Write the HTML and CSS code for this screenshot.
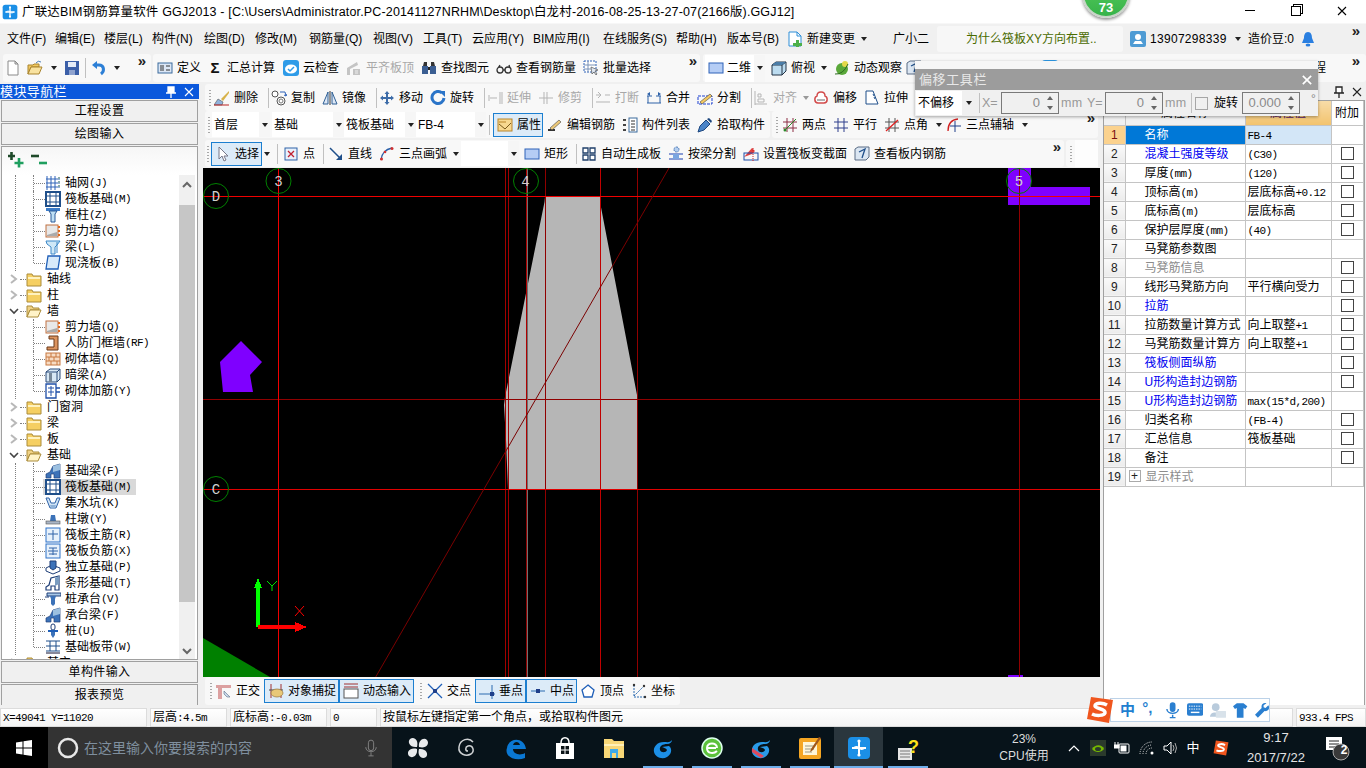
FILE: index.html
```html
<!DOCTYPE html>
<html lang="zh-CN">
<head>
<meta charset="utf-8">
<title>广联达BIM钢筋算量软件 GGJ2013</title>
<link rel="stylesheet" href="styles.css">
</head>
<body>
<svg class="lib" aria-hidden="true">
<defs>
<symbol id="app" viewBox="0 0 24 24"><rect x="1" y="1" width="22" height="22" rx="4" fill="#1b8fe6"/><path d="M12 5v14M5 12h14" stroke="#fff" stroke-width="2" fill="none"/><path d="M12 12c-3-3-5 0-6 0M12 12c3 3 5 0 6 0" stroke="#fff" stroke-width="1.5" fill="none"/><circle cx="12" cy="5" r="1.6" fill="#fff"/><circle cx="12" cy="19" r="1.6" fill="#fff"/></symbol>
<symbol id="doc" viewBox="0 0 16 16"><path d="M3 1h7l3 3v11H3z" fill="#fff" stroke="#8a8a8a"/><path d="M10 1v3h3z" fill="#ddd" stroke="#8a8a8a"/></symbol>
<symbol id="open" viewBox="0 0 16 16"><path d="M1 5h5l1-1h5v3H4l-3 7z" fill="#f0c860" stroke="#a9842e"/><path d="M4 7h11l-3 7H1z" fill="#f8e2a0" stroke="#a9842e"/><path d="M9 3q2-3 5-1" stroke="#4a7fb8" fill="none"/></symbol>
<symbol id="save" viewBox="0 0 16 16"><rect x="1" y="1" width="14" height="14" fill="#3b5fa8"/><rect x="4" y="2" width="8" height="5" fill="#e4ebf7"/><rect x="5" y="10" width="6" height="5" fill="#8fa3cf"/></symbol>
<symbol id="undo" viewBox="0 0 16 16"><path d="M10 14c4-3 3-9-2-9H4" stroke="#2c7fd6" stroke-width="3" fill="none"/><path d="M6 1v8L1 5z" fill="#2c7fd6"/></symbol>
<symbol id="def" viewBox="0 0 16 16"><rect x="1" y="3" width="14" height="10" fill="#dbe6f5" stroke="#3b6a9c"/><path d="M3 6h4M3 8h4M3 10h4M9 6h4M9 10h4" stroke="#333"/></symbol>
<symbol id="cloud" viewBox="0 0 16 16"><rect width="16" height="16" rx="3" fill="#2e9be8"/><ellipse cx="8" cy="9" rx="6" ry="4.5" fill="#fff"/><path d="M5 9l2 2 4-4" stroke="#2e9be8" stroke-width="1.5" fill="none"/></symbol>
<symbol id="flat" viewBox="0 0 16 16"><path d="M1 8l10-6 1 3-8 4v6H1zM7 9h7v6H7z" fill="#c4c4c4"/><path d="M9 11h3M9 13h3" stroke="#eee"/></symbol>
<symbol id="bino" viewBox="0 0 16 16"><path d="M2 6l1-4h3v4zM10 6V2h3l1 4z" fill="#333"/><rect x="1" y="6" width="6" height="8" fill="#3b5e92"/><rect x="9" y="6" width="6" height="8" fill="#3b5e92"/><rect x="7" y="7" width="2" height="3" fill="#222"/></symbol>
<symbol id="glass" viewBox="0 0 16 16"><path d="M1 10a3 3 0 1 0 6 0a3 3 0 1 0-6 0M9 10a3 3 0 1 0 6 0a3 3 0 1 0-6 0M7 10h2M2 8l2-3M14 8l-1-3" stroke="#333" stroke-width="1.3" fill="none"/></symbol>
<symbol id="batch" viewBox="0 0 16 16"><path d="M1 1h12v11H1z" fill="#fff" stroke="#2e62b8" stroke-dasharray="2 1"/><path d="M1 5h12M1 9h7M5 1v11" stroke="#7a93b8"/><path d="M8 7l7 3-3 1 2 3-1 1-2-3-2 2z" fill="#dfe7f2" stroke="#555" stroke-width=".7"/></symbol>
<symbol id="plane" viewBox="0 0 16 16"><rect x="1" y="3" width="14" height="10" fill="#b5cdf5" stroke="#2e62b8"/></symbol>
<symbol id="cube" viewBox="0 0 16 16"><path d="M1 5l4-3h10v9l-4 4H1z" fill="#bcdcf0" stroke="#234"/><path d="M1 5h10v10M11 5l4-3" stroke="#234" fill="none"/><path d="M1 5h10l4-3H5z" fill="#4a7da8"/></symbol>
<symbol id="orbit" viewBox="0 0 16 16"><circle cx="8" cy="9" r="6" fill="#5aa83a"/><circle cx="11" cy="4" r="3" fill="#e4d84a"/><path d="M1 14q8 1 13-10" stroke="#2d6b1f" fill="none"/></symbol>
<symbol id="nchg" viewBox="0 0 16 16"><path d="M2 1h8l4 4v10H2z" fill="#fff" stroke="#2e8fd8"/><path d="M10 1v4h4" fill="none" stroke="#2e8fd8"/><path d="M9 9h3v3h3v3h-3v1H9v-1H6v-3h3z" fill="#4db04a"/></symbol>
<symbol id="user" viewBox="0 0 16 16"><rect width="16" height="16" rx="2" fill="#4e9bd4"/><circle cx="8" cy="6" r="3" fill="#fff"/><path d="M3 13h10l-2-3H5z" fill="#fff"/></symbol>
<symbol id="bell" viewBox="0 0 16 16"><path d="M8 1c3 0 4 3 4 6l2 5H2l2-5c0-3 1-6 4-6z" fill="#2a7fe0"/><ellipse cx="8" cy="14" rx="2.4" ry="1.5" fill="#2a7fe0"/></symbol>
<symbol id="del" viewBox="0 0 16 16"><path d="M15 1L7 9l2 2 6-8z" fill="#d7b24a"/><path d="M4 9l5 3-1 3H0z" fill="#8fb2dd" stroke="#555" stroke-width=".6"/><path d="M0 15h15" stroke="#b22"/></symbol>
<symbol id="copy" viewBox="0 0 16 16"><rect x="1" y="1" width="6" height="6" rx="3" fill="#fff" stroke="#555"/><circle cx="10" cy="11" r="4" fill="#fff" stroke="#555"/><circle cx="10" cy="11" r="2" fill="none" stroke="#777"/><path d="M9 2h5l1 4M13 5l2 1 1-2" stroke="#2e62b8" fill="none"/></symbol>
<symbol id="mirror" viewBox="0 0 16 16"><path d="M1 14L6 2v12zM15 14L10 2v12z" fill="#dce7f6" stroke="#2e5f94"/><path d="M8 1v14" stroke="#333"/></symbol>
<symbol id="move" viewBox="0 0 16 16"><path d="M8 1l2.500 3H9v3h3V5.500L15 8l-3 2.500V9H9v3h1.500L8 15l-2.500-3H7V9H4v1.500L1 8l3-2.500V7h3V4H5.500z" fill="#3d6ca8"/></symbol>
<symbol id="rot" viewBox="0 0 16 16"><path d="M12 3A6 6 0 1 0 14 8" stroke="#2a74c8" stroke-width="3" fill="none"/><path d="M9 1h6v6z" fill="#2a74c8"/></symbol>
<symbol id="ext" viewBox="0 0 16 16"><path d="M1 8h9M1 6h2M1 10h2M13 2v12M15 2v12" stroke="#b5b5b5"/></symbol>
<symbol id="trim" viewBox="0 0 16 16"><path d="M1 8h14M6 2v12M9 2v12" stroke="#b5b5b5"/></symbol>
<symbol id="brk" viewBox="0 0 16 16"><path d="M1 5h5M10 5h5M1 12h14M3 8l3-3-3-3" stroke="#b5b5b5" fill="none"/></symbol>
<symbol id="mrg" viewBox="0 0 16 16"><path d="M1 6h5M10 6h5M1 13h14M2 6v7M14 6v7" stroke="#2e62a8" fill="none"/><path d="M4 2L1 4l3 2zM12 2l3 2-3 2z" fill="#2e62a8"/></symbol>
<symbol id="spl" viewBox="0 0 16 16"><rect x="1" y="6" width="14" height="8" fill="none" stroke="#1a3fd0" stroke-dasharray="3 1"/><path d="M3 12L13 4l2 2L5 14z" fill="#f4c860" stroke="#444" stroke-width=".6"/></symbol>
<symbol id="ali" viewBox="0 0 16 16"><path d="M2 1v14M2 14h12M5 4h3v3H5zM5 9h6v3H5z" stroke="#b5b5b5" fill="none"/></symbol>
<symbol id="off" viewBox="0 0 16 16"><path d="M8 2c3 0 4 2 4 4 3 1 3 7-1 7H5c-4 0-4-6-1-7 0-2 1-4 4-4z" fill="#fff" stroke="#d24b4b" stroke-width="1.500"/><path d="M4 10h8" stroke="#666"/></symbol>
<symbol id="str" viewBox="0 0 16 16"><path d="M2 1h7l5 13H2z" fill="#fff" stroke="#1f4f8a"/><path d="M9 4l1 2M10 7l1 2" stroke="#1f4f8a"/></symbol>
<symbol id="prop" viewBox="0 0 16 16"><rect x="1" y="2" width="14" height="12" fill="#f7d890" stroke="#b9852a"/><path d="M2 7l6 5 6-6" stroke="#7a5a1a" fill="none"/><path d="M2 5h7" stroke="#b9852a"/></symbol>
<symbol id="edit" viewBox="0 0 16 16"><path d="M1 13h7" stroke="#333" stroke-width="2"/><path d="M3 11l9-8 2 2-9 8z" fill="#ecc878" stroke="#444" stroke-width=".6"/></symbol>
<symbol id="list" viewBox="0 0 16 16"><rect x="1" y="2" width="3" height="2" fill="#444"/><rect x="1" y="7" width="3" height="2" fill="#444"/><rect x="1" y="12" width="3" height="2" fill="#444"/><rect x="7" y="1" width="8" height="14" fill="#fff" stroke="#3b6a9c"/><path d="M9 4h4M9 7h4M9 10h4M9 13h4" stroke="#333"/></symbol>
<symbol id="pick" viewBox="0 0 16 16"><path d="M1 15l2-6 6-6 4 4-6 6z" fill="#4b84c8" stroke="#1d467e"/><path d="M10 2l2-1 3 3-1 2z" fill="#1d467e"/></symbol>
<symbol id="two" viewBox="0 0 16 16"><path d="M5 1v14M11 1v14M1 5h14M1 11h14" stroke="#8c2f45"/><path d="M2 14L14 2" stroke="#2a8a2a"/><circle cx="3" cy="13" r="1.500" fill="#2a8a2a"/></symbol>
<symbol id="par" viewBox="0 0 16 16"><path d="M5 1v14M11 1v14M1 5h14M1 11h14" stroke="#2f3f8c"/></symbol>
<symbol id="ang" viewBox="0 0 16 16"><path d="M5 1v14M11 1v14M1 5h14M1 11h14" stroke="#555"/><path d="M2 14L14 3" stroke="#e02020" stroke-width="1.300"/></symbol>
<symbol id="arc3" viewBox="0 0 16 16"><path d="M2 14Q2 3 12 2" stroke="#d02020" fill="none" stroke-width="1.300"/><path d="M9 4v11M4 9h11" stroke="#1e3f8a"/></symbol>
<symbol id="cur" viewBox="0 0 16 16"><path d="M4 1v12l3-3 2 5 2-1-2-4h4z" fill="#fff" stroke="#778"/></symbol>
<symbol id="pnt" viewBox="0 0 16 16"><rect x="2" y="2" width="12" height="12" fill="#e8f0fb" stroke="#2e62a8"/><path d="M5 5l6 6M11 5l-6 6" stroke="#c02030" stroke-width="1.300"/></symbol>
<symbol id="lin" viewBox="0 0 16 16"><path d="M2 2l11 11" stroke="#1f4f8a" stroke-width="1.500"/><path d="M14 14V8l-6 6z" fill="#1f4f8a"/></symbol>
<symbol id="arc" viewBox="0 0 16 16"><path d="M2 14Q3 4 13 2" stroke="#2a5fa8" stroke-width="1.300" fill="none"/><circle cx="2.500" cy="13" r="1.500" fill="#d03030"/><circle cx="13" cy="2.500" r="1.500" fill="#d03030"/><circle cx="6" cy="6" r="1.300" fill="#d03030"/></symbol>
<symbol id="auto" viewBox="0 0 16 16"><path d="M2 2h5v5H2zM9 2h5v5H9zM2 9h5v5H2zM9 9h5v5H9z" fill="#fff" stroke="#1f3f6a" stroke-width="1.300"/></symbol>
<symbol id="bsp" viewBox="0 0 16 16"><rect x="6" y="1" width="5" height="5" rx="2.500" fill="#b5cff0" stroke="#2e62a8" stroke-dasharray="1.500 1"/><path d="M1 8h14M1 13h14" stroke="#1a3fb0"/><rect x="5" y="8" width="6" height="5" fill="#7aa5e0"/></symbol>
<symbol id="vsec" viewBox="0 0 16 16"><path d="M1 11L9 2l3 3-3 3z" fill="#e04040"/><rect x="1" y="7" width="14" height="7" fill="none" stroke="#1f4fa8"/><path d="M10 2v13" stroke="#d02020" stroke-dasharray="1 1"/></symbol>
<symbol id="vw" viewBox="0 0 16 16"><path d="M1 3l3-2h11v10l-3 3H1z" fill="#dbe6f2" stroke="#5a6d85"/><path d="M5 6l6-3-3 9" stroke="#1f4f8a" fill="none" stroke-width="1.300"/></symbol>
<symbol id="ort" viewBox="0 0 16 16"><path d="M0 2h15v3H6v11H2V5H0z" fill="#dca0a0"/><path d="M8 8l6 6-3 0-3-3z" fill="#c9d8ea" stroke="#5a6d85" stroke-width=".6"/></symbol>
<symbol id="snp" viewBox="0 0 16 16"><path d="M3 1v14M13 1v14" stroke="#a03030"/><path d="M1 7h14" stroke="#444"/><ellipse cx="9" cy="10" rx="6" ry="4" fill="#e8c878" stroke="#96743a" stroke-width=".7"/></symbol>
<symbol id="dyn" viewBox="0 0 16 16"><path d="M1 1h14M1 4h14" stroke="#a03030"/><rect x="1" y="6" width="14" height="9" fill="#fff" stroke="#555"/></symbol>
<symbol id="crs" viewBox="0 0 16 16"><path d="M1 1l14 14M15 1L1 15" stroke="#1f5fb8" stroke-width="1.300"/><rect x="6" y="6" width="4" height="4" fill="#1f3f8a"/></symbol>
<symbol id="per" viewBox="0 0 16 16"><path d="M0 11h16M13 2v14" stroke="#2a6ab0"/><rect x="11" y="9" width="4" height="4" fill="#1f3f8a"/></symbol>
<symbol id="mid" viewBox="0 0 16 16"><path d="M1 8h14" stroke="#2a6ab0"/><rect x="6" y="6" width="4" height="4" fill="#1f3f8a"/></symbol>
<symbol id="vtx" viewBox="0 0 16 16"><path d="M8 2l6 5-2 7H4L2 7z" fill="#fff" stroke="#1f5fb8" stroke-width="1.300"/></symbol>
<symbol id="crd" viewBox="0 0 16 16"><path d="M3 2v12M3 14h12M3 13L12 4" stroke="#2a6ab0" stroke-dasharray="2 1" fill="none"/><circle cx="3" cy="2" r="1.200" fill="#333"/><circle cx="14" cy="14" r="1.200" fill="#333"/><circle cx="13" cy="3" r="1.200" fill="#333"/></symbol>
<symbol id="fold" viewBox="0 0 16 16"><path d="M1 3h5l1 2h8v10H1z" fill="#f5cf62" stroke="#ab8c3a"/><path d="M2 6h12v2H2z" fill="#fff2bf"/></symbol>
<symbol id="foldo" viewBox="0 0 16 16"><path d="M1 3h5l1 2h6v2H4l-3 7z" fill="#f0d286" stroke="#ab8c3a"/><path d="M4 7h11l-3 7H1z" fill="#fff3c8" stroke="#ab8c3a"/></symbol>
<symbol id="t-grid" viewBox="0 0 16 16"><path d="M2 1v14M6 1v14M10 1v14M1 4h14M1 8h14M1 12h14" stroke="#2e62b8"/><path d="M14 2v12" stroke="#8aa" stroke-dasharray="2 2" stroke-width="2"/></symbol>
<symbol id="t-raft" viewBox="0 0 16 16"><rect x="1" y="1" width="14" height="14" fill="#fff" stroke="#1f4f8a" stroke-width="2"/><path d="M5 1v14M11 1v14M1 5h14M1 11h14" stroke="#1f4f8a"/></symbol>
<symbol id="t-col" viewBox="0 0 16 16"><path d="M1 1h14v3H1z" fill="#3c7cc8"/><path d="M4 4h8l-2 3v8H6V7z" fill="#bfe0f5" stroke="#2a5a98"/></symbol>
<symbol id="t-shr" viewBox="0 0 16 16"><rect x="1" y="2" width="12" height="12" fill="#e8e8e8" stroke="#c07040"/><path d="M2 12l10-3v4H2z" fill="#aaa"/><path d="M14 3v11" stroke="#e06a20" stroke-dasharray="2 2" stroke-width="2"/></symbol>
<symbol id="t-bm" viewBox="0 0 16 16"><path d="M1 2h14l-3 4-2 2v7H6V8L2 5z" fill="#cfe8f7" stroke="#3c88c8"/><path d="M12 3v11" stroke="#3c88c8"/></symbol>
<symbol id="t-slab" viewBox="0 0 16 16"><path d="M3 1h12l-2 13H1z" fill="#d8eafa" stroke="#1f5fb8" stroke-width="1.300"/></symbol>
<symbol id="t-door" viewBox="0 0 16 16"><path d="M4 1h9v14H2v-3h7V4H4z" fill="#dc9460" stroke="#6a3818"/></symbol>
<symbol id="t-brk" viewBox="0 0 16 16"><rect x="1" y="2" width="14" height="12" fill="#f7dcc4" stroke="#c87840"/><path d="M1 6h14M1 10h14M6 2v4M11 2v4M4 6v4M9 6v4M6 10v4M12 10v4" stroke="#c87840"/></symbol>
<symbol id="t-dk" viewBox="0 0 16 16"><path d="M1 5l4-3h10v10l-3 3H1z" fill="#d8e8f5" stroke="#2a4a78"/><path d="M1 5h11v10M12 5l3-3" stroke="#2a4a78" fill="none"/><rect x="4" y="6" width="3" height="9" fill="#789"/></symbol>
<symbol id="t-add" viewBox="0 0 16 16"><path d="M1 1h10v14H1zM11 5h4M11 9h4" fill="#fff" stroke="#1f4fa8" stroke-width="1.300"/><path d="M3 5h6M3 9h6M6 3v10" stroke="#1f4fa8"/></symbol>
<symbol id="t-fb" viewBox="0 0 16 16"><path d="M1 15V11l4-2 3-6 7-2v14H9v-4H6v4z" fill="#3c72b8" stroke="#1f3f78" stroke-width=".7"/><path d="M8 3l7-2v6l-7 2z" fill="#9cc0e0"/></symbol>
<symbol id="t-pit" viewBox="0 0 16 16"><path d="M1 3h3l2 5h4l2-5h3l-4 10H5z" fill="#cfe3f5" stroke="#2e62a8"/><path d="M5 10h6l-1 3H6z" fill="#8fb2d8"/></symbol>
<symbol id="t-pier" viewBox="0 0 16 16"><path d="M6 4h4l1 6H5z" fill="#3c72b8"/><rect x="1" y="10" width="14" height="3" fill="#aab5c5" stroke="#555" stroke-width=".6"/></symbol>
<symbol id="t-main" viewBox="0 0 16 16"><rect x="1" y="1" width="14" height="14" fill="#e7f1fb" stroke="#2e72c8"/><path d="M3 7h10M8 3v10" stroke="#2e62a8"/></symbol>
<symbol id="t-neg" viewBox="0 0 16 16"><rect x="1" y="1" width="14" height="14" fill="#e7f1fb" stroke="#2e72c8"/><path d="M3 8h10M8 5v7M4 5h8M4 11h8" stroke="#2e62a8"/></symbol>
<symbol id="t-iso" viewBox="0 0 16 16"><path d="M1 9l6-3 8 3v3l-7 3-7-3z" fill="#fff" stroke="#1f3f78"/><path d="M5 2h6v7l-3 2-3-2z" fill="#3c72b8" stroke="#1f3f78"/></symbol>
<symbol id="t-str" viewBox="0 0 16 16"><path d="M1 15v-3l3-2 2-7 8-2v14h-4v-4H6v4z" fill="#fff" stroke="#1f3f78" stroke-width="1.200"/><path d="M10 3l4-2v8l-4 2z" fill="#7a9cc0"/></symbol>
<symbol id="t-cap" viewBox="0 0 16 16"><path d="M2 2h14v3H2z" fill="#a8c8e8" stroke="#1f3f78"/><path d="M5 5h6l-1 3v5l-2 2-2-2V8z" fill="#3c72b8"/><path d="M0 6h4" stroke="#1f3f78"/></symbol>
<symbol id="t-pile" viewBox="0 0 16 16"><rect x="6" y="1" width="4" height="6" rx="2" fill="#fff" stroke="#1f3f78"/><path d="M3 7h10v2H3z" fill="#1f5fb8"/><path d="M6 9h4v3l-2 3-2-3z" fill="#3c72b8"/></symbol>
<symbol id="t-bnd" viewBox="0 0 16 16"><path d="M1 2h14M1 12h14M5 2v10M11 2v10M1 7h14" stroke="#1f4f8a"/><path d="M1 14h14" stroke="#889" stroke-width="2"/></symbol>
<symbol id="chev" viewBox="0 0 12 12"><path d="M3 2l5 4-5 4" fill="none" stroke="#b8b8b8" stroke-width="2"/></symbol>
<symbol id="chevd" viewBox="0 0 12 12"><path d="M2 4l4 4 4-4" fill="none" stroke="#444" stroke-width="1.600"/></symbol>
<symbol id="chevu" viewBox="0 0 12 12"><path d="M2 8l4-4 4 4" fill="none" stroke="#666" stroke-width="2"/></symbol>
<symbol id="chevb" viewBox="0 0 12 12"><path d="M2 4l4 4 4-4" fill="none" stroke="#666" stroke-width="2"/></symbol>
<symbol id="pin" viewBox="0 0 12 12"><path d="M3 1h6v6H3zM1 7h10M6 7v5" fill="#fff" stroke="currentColor" stroke-width="1.300"/></symbol>
<symbol id="x" viewBox="0 0 12 12"><path d="M2 2l8 8M10 2l-8 8" stroke="currentColor" stroke-width="1.100"/></symbol>
<symbol id="x2" viewBox="0 0 12 12"><path d="M1 1l10 10M11 1L1 11" stroke="currentColor" stroke-width="2"/></symbol>
<symbol id="sogou" viewBox="0 0 28 28"><path d="M5 1l22 3-4 23-22-4z" fill="#f0561e"/><path d="M21 9c-5-3-12-2-12 1 0 3 11 2 10 7-1 3-9 3-13 1" stroke="#fff" stroke-width="3.500" fill="none"/></symbol>
</defs>
</svg>

<header class="title">
  <svg class="i app"><use href="#app"/></svg>
  <span class="ttext">广联达BIM钢筋算量软件 GGJ2013 - [C:\Users\Administrator.PC-20141127NRHM\Desktop\白龙村-2016-08-25-13-27-07(2166版).GGJ12]</span>
  <div class="win">
    <span class="wb"><span class="wmin"></span></span>
    <span class="wb"><span class="wres"></span></span>
    <span class="wb"><svg class="wx"><use href="#x"/></svg></span>
  </div>
</header>

<nav class="menu">
  <span>文件(F)</span><span>编辑(E)</span><span>楼层(L)</span><span>构件(N)</span><span>绘图(D)</span><span>修改(M)</span><span>钢筋量(Q)</span><span>视图(V)</span><span>工具(T)</span><span>云应用(Y)</span><span>BIM应用(I)</span><span>在线服务(S)</span><span>帮助(H)</span><span>版本号(B)</span>
  <span class="it"><svg class="i"><use href="#nchg"/></svg>新建变更</span><span class="d"></span><span></span>
  <span>广小二</span>
  <span class="ask">为什么筏板XY方向布置..</span><span></span>
  <span class="it"><svg class="i"><use href="#user"/></svg><span class="phone">13907298339</span></span><span class="d"></span><span></span>
  <span>造价豆:0</span><svg class="i"><use href="#bell"/></svg><span></span><span class="more">»</span>
</nav>

<div class="mainbar">
  <div class="strip sa">
    <svg class="i c"><use href="#doc"/></svg><svg class="i c"><use href="#open"/></svg><span class="d"></span><svg class="i c"><use href="#save"/></svg><span class="s"></span><svg class="i c"><use href="#undo"/></svg><span class="d"></span><span></span><span class="more">»</span>
  </div>
  <div class="strip sb">
    <span class="it"><svg class="i"><use href="#def"/></svg>定义</span>
    <span class="it"><span class="sig">Σ</span>汇总计算</span>
    <span class="it"><svg class="i"><use href="#cloud"/></svg>云检查</span>
    <span class="it off"><svg class="i"><use href="#flat"/></svg>平齐板顶</span>
    <span class="it"><svg class="i"><use href="#bino"/></svg>查找图元</span>
    <span class="it"><svg class="i"><use href="#glass"/></svg>查看钢筋量</span>
    <span class="it"><svg class="i"><use href="#batch"/></svg>批量选择</span>
    <span class="more">»</span>
  </div>
  <div class="strip sc">
    <span class="cb cb2"><span class="it2"><svg class="i"><use href="#plane"/></svg>二维</span><span class="dbox"><span class="d"></span></span></span>
    <span class="it"><svg class="i"><use href="#cube"/></svg>俯视</span><span class="d"></span><span></span>
    <span class="it"><svg class="i"><use href="#orbit"/></svg>动态观察</span>
    <svg class="i"><use href="#vw"/></svg><svg class="i"><use href="#orbit"/></svg><svg class="i"><use href="#cloud"/></svg><svg class="i"><use href="#move"/></svg>
    <span class="tail"><svg class="i"><use href="#ang"/></svg><span>工程</span></span><span class="more">»</span>
  </div>
</div>

<main class="body">
  <aside class="nav">
    <div class="navh"><span>模块导航栏</span><span class="navb"><svg class="sm"><use href="#pin"/></svg><svg class="sm"><use href="#x"/></svg></span></div>
    <div class="nbtn">工程设置</div>
    <div class="nbtn">绘图输入</div>
    <div class="tbox">
      <div class="tools">
        <svg class="exp" viewBox="0 0 16 16"><path d="M3.500 0v8M0 4h7" stroke="#1f4a2a" stroke-width="2.600"/><path d="M11 6v9.500M6.500 11h9" stroke="#1f9f5f" stroke-width="2.600"/></svg>
        <svg class="exp" viewBox="0 0 16 16"><path d="M0 4h8" stroke="#1f4a2a" stroke-width="2.600"/><path d="M8 11h8" stroke="#1f9f5f" stroke-width="2.600"/></svg>
      </div>
      <div class="tview">
        <div class="tlist">
          <div class="kids">
            <div class="leaf"><svg class="i"><use href="#t-grid"/></svg>轴网<b class="m">(J)</b></div>
            <div class="leaf"><svg class="i"><use href="#t-raft"/></svg>筏板基础<b class="m">(M)</b></div>
            <div class="leaf"><svg class="i"><use href="#t-col"/></svg>框柱<b class="m">(Z)</b></div>
            <div class="leaf"><svg class="i"><use href="#t-shr"/></svg>剪力墙<b class="m">(Q)</b></div>
            <div class="leaf"><svg class="i"><use href="#t-bm"/></svg>梁<b class="m">(L)</b></div>
            <div class="leaf"><svg class="i"><use href="#t-slab"/></svg>现浇板<b class="m">(B)</b></div>
          </div>
          <div class="fd"><svg class="ch"><use href="#chev"/></svg><span class="dots"></span><svg class="i"><use href="#fold"/></svg>轴线</div>
          <div class="fd"><svg class="ch"><use href="#chev"/></svg><span class="dots"></span><svg class="i"><use href="#fold"/></svg>柱</div>
          <div class="fd"><svg class="ch"><use href="#chevd"/></svg><span class="dots"></span><svg class="i"><use href="#foldo"/></svg>墙</div>
          <div class="kids">
            <div class="leaf"><svg class="i"><use href="#t-shr"/></svg>剪力墙<b class="m">(Q)</b></div>
            <div class="leaf"><svg class="i"><use href="#t-door"/></svg>人防门框墙<b class="m">(RF)</b></div>
            <div class="leaf"><svg class="i"><use href="#t-brk"/></svg>砌体墙<b class="m">(Q)</b></div>
            <div class="leaf"><svg class="i"><use href="#t-dk"/></svg>暗梁<b class="m">(A)</b></div>
            <div class="leaf"><svg class="i"><use href="#t-add"/></svg>砌体加筋<b class="m">(Y)</b></div>
          </div>
          <div class="fd"><svg class="ch"><use href="#chev"/></svg><span class="dots"></span><svg class="i"><use href="#fold"/></svg>门窗洞</div>
          <div class="fd"><svg class="ch"><use href="#chev"/></svg><span class="dots"></span><svg class="i"><use href="#fold"/></svg>梁</div>
          <div class="fd"><svg class="ch"><use href="#chev"/></svg><span class="dots"></span><svg class="i"><use href="#fold"/></svg>板</div>
          <div class="fd"><svg class="ch"><use href="#chevd"/></svg><span class="dots"></span><svg class="i"><use href="#foldo"/></svg>基础</div>
          <div class="kids">
            <div class="leaf"><svg class="i"><use href="#t-fb"/></svg>基础梁<b class="m">(F)</b></div>
            <div class="leaf on"><svg class="i"><use href="#t-raft"/></svg>筏板基础<b class="m">(M)</b></div>
            <div class="leaf"><svg class="i"><use href="#t-pit"/></svg>集水坑<b class="m">(K)</b></div>
            <div class="leaf"><svg class="i"><use href="#t-pier"/></svg>柱墩<b class="m">(Y)</b></div>
            <div class="leaf"><svg class="i"><use href="#t-main"/></svg>筏板主筋<b class="m">(R)</b></div>
            <div class="leaf"><svg class="i"><use href="#t-neg"/></svg>筏板负筋<b class="m">(X)</b></div>
            <div class="leaf"><svg class="i"><use href="#t-iso"/></svg>独立基础<b class="m">(P)</b></div>
            <div class="leaf"><svg class="i"><use href="#t-str"/></svg>条形基础<b class="m">(T)</b></div>
            <div class="leaf"><svg class="i"><use href="#t-cap"/></svg>桩承台<b class="m">(V)</b></div>
            <div class="leaf"><svg class="i"><use href="#t-fb"/></svg>承台梁<b class="m">(F)</b></div>
            <div class="leaf"><svg class="i"><use href="#t-pile"/></svg>桩<b class="m">(U)</b></div>
            <div class="leaf"><svg class="i"><use href="#t-bnd"/></svg>基础板带<b class="m">(W)</b></div>
          </div>
          <div class="fd"><svg class="ch"><use href="#chev"/></svg><span class="dots"></span><svg class="i"><use href="#fold"/></svg>其它</div>
        </div>
        <div class="sb-v">
          <div class="arr up"><svg class="ch"><use href="#chevu"/></svg></div>
          <div class="thumb"></div>
          <div class="arr dn"><svg class="ch"><use href="#chevb"/></svg></div>
        </div>
      </div>
    </div>
    <div class="nbtn">单构件输入</div>
    <div class="nbtn">报表预览</div>
  </aside>

  <section class="center">
    <div class="strip r2">
      <span class="h"></span>
      <span class="it"><svg class="i"><use href="#del"/></svg>删除</span><span class="s"></span>
      <span class="it"><svg class="i"><use href="#copy"/></svg>复制</span>
      <span class="it"><svg class="i"><use href="#mirror"/></svg>镜像</span><span class="s"></span>
      <span class="it"><svg class="i"><use href="#move"/></svg>移动</span>
      <span class="it"><svg class="i"><use href="#rot"/></svg>旋转</span><span class="s"></span>
      <span class="it off"><svg class="i"><use href="#ext"/></svg>延伸</span>
      <span class="it off"><svg class="i"><use href="#trim"/></svg>修剪</span><span class="s"></span>
      <span class="it off"><svg class="i"><use href="#brk"/></svg>打断</span>
      <span class="it"><svg class="i"><use href="#mrg"/></svg>合并</span>
      <span class="it"><svg class="i"><use href="#spl"/></svg>分割</span><span class="s"></span>
      <span class="it off"><svg class="i"><use href="#ali"/></svg>对齐<span class="d dg"></span></span>
      <span class="it"><svg class="i"><use href="#off"/></svg>偏移</span>
      <span class="it"><svg class="i"><use href="#str"/></svg>拉伸</span>
    </div>

    <div class="rowpair">
      <div class="strip r3">
        <span class="h"></span>
        <span class="cb w56"><span>首层</span><span class="dbox"><span class="d"></span></span></span>
        <span class="cb w72"><span>基础</span><span class="dbox"><span class="d"></span></span></span>
        <span class="cb w72"><span>筏板基础</span><span class="dbox"><span class="d"></span></span></span>
        <span class="cb w70"><span>FB-4</span><span class="dbox"><span class="d"></span></span></span>
        <span class="s"></span>
        <span class="it btn w50"><svg class="i"><use href="#prop"/></svg>属性</span>
        <span class="it"><svg class="i"><use href="#edit"/></svg>编辑钢筋</span>
        <span class="it"><svg class="i"><use href="#list"/></svg>构件列表</span>
        <span class="it"><svg class="i"><use href="#pick"/></svg>拾取构件</span>
      </div>
      <div class="strip r3b">
        <span class="h"></span>
        <span class="it"><svg class="i"><use href="#two"/></svg>两点</span>
        <span class="it"><svg class="i"><use href="#par"/></svg>平行</span>
        <span class="it"><svg class="i"><use href="#ang"/></svg>点角</span><span class="d"></span>
        <span class="it"><svg class="i"><use href="#arc3"/></svg>三点辅轴</span><span class="d"></span>
        <span></span><span class="more">»</span>
      </div>
    </div>

    <div class="rowpair r4p">
      <div class="strip r4">
        <span class="h"></span>
        <span class="it btn w51"><svg class="i"><use href="#cur"/></svg>选择</span><span class="d"></span><span class="s"></span>
        <span class="it"><svg class="i"><use href="#pnt"/></svg>点</span><span class="s"></span>
        <span class="it"><svg class="i"><use href="#lin"/></svg>直线</span>
        <span class="it"><svg class="i"><use href="#arc"/></svg>三点画弧</span><span class="d"></span>
        <span class="cb w58"><span></span><span class="dbox"><span class="d"></span></span></span>
        <span class="it"><svg class="i"><use href="#plane"/></svg>矩形</span><span class="s"></span>
        <span class="it"><svg class="i"><use href="#auto"/></svg>自动生成板</span>
        <span class="it"><svg class="i"><use href="#bsp"/></svg>按梁分割</span>
        <span class="it"><svg class="i"><use href="#vsec"/></svg>设置筏板变截面</span>
        <span class="it"><svg class="i"><use href="#vw"/></svg>查看板内钢筋</span>
        <span class="more">»</span>
      </div>
      <div class="strip r4b"><span class="h"></span><span class="wblock"></span></div>
    </div>

    <svg class="cv" viewBox="203 168 897 509" width="897" height="509">
      <rect x="203" y="168" width="897" height="509" fill="#000"/>
      <polygon points="203,638 270,677 203,677" fill="#008000"/>
      <polygon points="545,197 600,197 600,202 637,395 637,489 508,489 506,440 504,405 505,397 544.500,202" fill="#b6b6b6"/>
      <polygon points="241,341 262,362 250,375 253,392 223,392 220,362" fill="#7f00ff"/>
      <g fill="#7f00ff" shape-rendering="crispEdges">
        <rect x="1008" y="168" width="23" height="19"/><rect x="1008" y="187" width="82" height="18"/><rect x="1008" y="675" width="15" height="2"/>
      </g>
      <g shape-rendering="crispEdges" fill="none">
        <path d="M203 399.500H1100" stroke="#900000"/>
        <path d="M1019.500 168V677" stroke="#900000"/>
        <path d="M505.500 168V677M508.500 168V677" stroke="#a00000"/>
        <path d="M527.500 168V677" stroke="#707070"/>
        <path d="M526.500 168V489" stroke="#b00000"/>
        <path d="M526.500 489V677" stroke="#900000"/>
        <path d="M545.500 168V677M637.500 168V677" stroke="#900000"/>
        <path d="M600.500 168V677" stroke="#c00000"/>
        <path d="M278.500 168V677M203 196.500H1100" stroke="#f00000"/>
        <path d="M203 489.500H1100" stroke="#e00000"/>
      </g>
      <path d="M669 168L375.700 677" stroke="#7a0000" fill="none"/>
      <g fill="none" stroke="#008000">
        <circle cx="278.500" cy="181" r="12.500"/><circle cx="526" cy="181" r="12.500"/><circle cx="1019" cy="181" r="12.500"/><circle cx="216" cy="196" r="12.500"/><circle cx="216" cy="489" r="12.500"/>
      </g>
      <g class="ax">
        <text x="278.500" y="186">3</text><text x="525.500" y="186">4</text><text x="1019" y="186">5</text><text x="216" y="201">D</text><text x="216" y="494">C</text>
      </g>
      <g shape-rendering="crispEdges">
        <rect x="256" y="586" width="4" height="41" fill="#00ff00"/>
        <polygon points="258,578 262,588 254,588" fill="#00ff00"/>
        <rect x="258" y="625" width="37" height="4" fill="#ff0000"/>
        <polygon points="307,627 295,622 295,632" fill="#ff0000"/>
      </g>
      <path d="M267 581l5 5 5-5M272 586v5" stroke="#00e000" fill="none"/>
      <path d="M295 606l9 10M304 606l-9 10" stroke="#ff0000" fill="none"/>
    </svg>

    <div class="strip rb">
      <span class="h"></span>
      <span class="it"><svg class="i"><use href="#ort"/></svg>正交</span>
      <span class="it btn"><svg class="i"><use href="#snp"/></svg>对象捕捉</span>
      <span class="it btn"><svg class="i"><use href="#dyn"/></svg>动态输入</span>
      <span class="h"></span>
      <span class="it"><svg class="i"><use href="#crs"/></svg>交点</span>
      <span class="it btn"><svg class="i"><use href="#per"/></svg>垂点</span>
      <span class="it btn w51"><svg class="i"><use href="#mid"/></svg>中点</span>
      <span class="it"><svg class="i"><use href="#vtx"/></svg>顶点</span>
      <span class="it"><svg class="i"><use href="#crd"/></svg>坐标</span>
    </div>
  </section>

  <aside class="props">
    <div class="ph"><svg class="sm"><use href="#pin"/></svg><svg class="sm"><use href="#x"/></svg></div>
    <div class="pbox">
      <table class="pt">
        <colgroup><col class="c1"><col class="c2"><col class="c3"><col class="c4"></colgroup>
        <thead><tr><th class="n"></th><th class="hn">属性名称</th><th class="hv">属性值</th><th class="ha">附加</th></tr></thead>
        <tbody>
          <tr class="sel"><td class="n">1</td><td class="nm">名称</td><td class="v"><b class="m">FB-4</b></td><td></td></tr>
          <tr><td class="n">2</td><td class="nm lk">混凝土强度等级</td><td class="v"><b class="m">(C30)</b></td><td class="k"><i></i></td></tr>
          <tr><td class="n">3</td><td class="nm">厚度<b class="m">(mm)</b></td><td class="v"><b class="m">(120)</b></td><td class="k"><i></i></td></tr>
          <tr><td class="n">4</td><td class="nm">顶标高<b class="m">(m)</b></td><td class="v">层底标高<b class="m">+0.12</b></td><td class="k"><i></i></td></tr>
          <tr><td class="n">5</td><td class="nm">底标高<b class="m">(m)</b></td><td class="v">层底标高</td><td class="k"><i></i></td></tr>
          <tr><td class="n">6</td><td class="nm">保护层厚度<b class="m">(mm)</b></td><td class="v"><b class="m">(40)</b></td><td class="k"><i></i></td></tr>
          <tr><td class="n">7</td><td class="nm">马凳筋参数图</td><td class="v"></td><td></td></tr>
          <tr><td class="n">8</td><td class="nm gr">马凳筋信息</td><td class="v"></td><td class="k"><i></i></td></tr>
          <tr><td class="n">9</td><td class="nm">线形马凳筋方向</td><td class="v">平行横向受力</td><td class="k"><i></i></td></tr>
          <tr><td class="n">10</td><td class="nm lk">拉筋</td><td class="v"></td><td class="k"><i></i></td></tr>
          <tr><td class="n">11</td><td class="nm">拉筋数量计算方式</td><td class="v">向上取整<b class="m">+1</b></td><td class="k"><i></i></td></tr>
          <tr><td class="n">12</td><td class="nm">马凳筋数量计算方</td><td class="v">向上取整<b class="m">+1</b></td><td class="k"><i></i></td></tr>
          <tr><td class="n">13</td><td class="nm lk">筏板侧面纵筋</td><td class="v"></td><td class="k"><i></i></td></tr>
          <tr><td class="n">14</td><td class="nm lk">U形构造封边钢筋</td><td class="v"></td><td class="k"><i></i></td></tr>
          <tr><td class="n">15</td><td class="nm lk">U形构造封边钢筋</td><td class="v"><b class="m">max(15*d,200)</b></td><td></td></tr>
          <tr><td class="n">16</td><td class="nm">归类名称</td><td class="v"><b class="m">(FB-4)</b></td><td class="k"><i></i></td></tr>
          <tr><td class="n">17</td><td class="nm">汇总信息</td><td class="v">筏板基础</td><td class="k"><i></i></td></tr>
          <tr><td class="n">18</td><td class="nm">备注</td><td class="v"></td><td class="k"><i></i></td></tr>
          <tr><td class="n">19</td><td class="nm gr plus"><span class="pl">+</span>显示样式</td><td class="v"></td><td></td></tr>
        </tbody>
      </table>
    </div>
  </aside>
</main>

<footer class="status">
  <span class="cell"><b class="m">X=49041 Y=11020</b></span>
  <span class="cell">层高<b class="m">:4.5m</b></span>
  <span class="cell">底标高<b class="m">:-0.03m</b></span>
  <span class="cell"><b class="m">0</b></span>
  <span class="cell">按鼠标左键指定第一个角点，或拾取构件图元</span>
  <span class="cell"><b class="m">933.4 FPS</b></span>
</footer>

<div class="task">
  <div class="start"><svg width="16" height="16" viewBox="0 0 16 16"><path d="M0 2.500l6.500-1v6H0zM7.500 1.300l8.500-1.300v7.500H7.500zM0 8.500h6.500v6l-6.500-1zM7.500 8.500H16V16l-8.500-1.300z" fill="#fff"/></svg></div>
  <div class="search">
    <svg class="ring" viewBox="0 0 22 22"><circle cx="11" cy="11" r="9" fill="none" stroke="#e8e8e8" stroke-width="2.500"/></svg>
    <span class="sq">在这里输入你要搜索的内容</span>
    <svg class="mic" viewBox="0 0 16 20"><rect x="5" y="1" width="6" height="12" rx="3" fill="none" stroke="#888"/><path d="M2 9c0 7 12 7 12 0M8 15v4M5 19h6" fill="none" stroke="#888"/></svg>
  </div>
  <span class="tk"><svg class="t" viewBox="0 0 24 24"><path d="M11 11C4 12 1 6 4 3c4-3 9 1 7 8zM13 11c-1-7 5-10 8-7 3 4-1 9-8 7zM13 13c7-1 10 5 7 8-4 3-9-1-7-8zM11 13c1 7-5 10-8 7-3-4 1-9 8-7z" fill="#e8eaec"/></svg></span>
  <span class="tk"><svg class="t" viewBox="0 0 24 24"><path d="M18 6C14 1 5 3 4 11c-1 7 7 10 12 7 4-3 2-9-3-8-3 1-3 5 0 5" fill="none" stroke="#cfd2d4" stroke-width="1.500"/></svg></span>
  <span class="tk"><svg class="t" viewBox="0 0 24 24"><path d="M3 12C4 2 20 0 22 13H9c0 5 7 7 12 4v5C11 26 0 20 3 12zM9 9h7c-1-4-6-4-7 0z" fill="#0a78d4"/></svg></span>
  <span class="tk"><svg class="t" viewBox="0 0 24 24"><path d="M3 7h18v16H3z" fill="#fff"/><path d="M8 7c0-7 8-7 8 0" fill="none" stroke="#fff" stroke-width="1.500"/><path d="M8 10h3.500v3.500H8zM12.500 10H16v3.500h-3.500zM8 14.500h3.500V18H8zM12.500 14.500H16V18h-3.500z" fill="#0c1418"/></svg></span>
  <span class="tk"><svg class="t" viewBox="0 0 24 24"><path d="M2 3h8l2 2h10v17H2z" fill="#f8d777"/><path d="M2 8h20v2H2z" fill="#fff0b8"/><rect x="8" y="13" width="8" height="9" fill="#3fa9e8"/><rect x="10" y="17" width="4" height="5" fill="#f8d777"/></svg></span>
  <span class="tk run"><svg class="t" viewBox="0 0 24 24"><path d="M21 4c-2 3-5 2-8 2C6 6 2 11 3 16c1 5 8 8 13 5 4-2 6-8 2-11l-7 1c2 1 4 1 5 3-1 3-6 3-7 0-1-4 3-6 7-6 3 0 5-2 5-4z" fill="#1c8fe6"/></svg></span>
  <span class="tk run"><svg class="t" viewBox="0 0 24 24"><circle cx="12" cy="12" r="10" fill="#5cc13b" stroke="#dfe" stroke-width="1.500"/><path d="M7 12h9M7 12c0-6 10-6 10 0M7 12c0 6 7 6 10 3" stroke="#fff" stroke-width="2" fill="none"/></svg></span>
  <span class="tk run"><svg class="t" viewBox="0 0 24 24"><path d="M21 4c-2 3-5 2-8 2C6 6 2 11 3 16c1 5 8 8 13 5 4-2 6-8 2-11l-7 1c2 1 4 1 5 3-1 3-6 3-7 0-1-4 3-6 7-6 3 0 5-2 5-4z" fill="#2a9be8"/><path d="M3 12l12 8-3 2-9-6z" fill="#e24a5c"/></svg></span>
  <span class="tk run"><svg class="t" viewBox="0 0 24 24"><rect x="1" y="2" width="22" height="21" rx="2" fill="#f5a623"/><rect x="5" y="6" width="14" height="13" fill="#fff6d8"/><path d="M7 10h9M7 13h9M7 16h7" stroke="#998"/><path d="M21 1L13 13l-1 3 3-2 8-12z" fill="#a0561a"/></svg></span>
  <span class="tk run act"><svg class="t"><use href="#app"/></svg></span>
  <span class="tk run"><svg class="t" viewBox="0 0 24 24"><rect x="2" y="12" width="14" height="12" fill="#e6e6e6"/><path d="M4 15h10M4 18h10M4 21h10" stroke="#777"/><text x="12" y="17" class="q">?</text></svg></span>
  <div class="cpu"><span>23%</span><span>CPU使用</span></div>
  <span class="tray w24"><svg width="12" height="8" viewBox="0 0 12 8"><path d="M1 7l5-5 5 5" fill="none" stroke="#fff" stroke-width="1.200"/></svg></span>
  <span class="tray w24"><svg width="16" height="16" viewBox="0 0 16 16"><rect width="16" height="16" fill="#2b3a2c"/><path d="M2 9c3-5 10-5 12 0-3 4-9 4-12 0z" fill="#76b900"/><ellipse cx="8" cy="9" rx="3" ry="2" fill="#2b3a2c"/></svg></span>
  <span class="tray w24"><svg width="16" height="12" viewBox="0 0 16 12"><path d="M1 0v3M4 0v3M0 3h5v3H0z" stroke="#fff" fill="#fff"/><rect x="5" y="2" width="10" height="9" rx="1" fill="none" stroke="#fff"/><rect x="6.500" y="3.500" width="6" height="6" fill="#fff"/></svg></span>
  <span class="tray w25"><svg width="16" height="14" viewBox="0 0 16 14"><path d="M1 13a12 12 0 0 1 12-12M4 13a9 9 0 0 1 9-9M7 13a6 6 0 0 1 6-6" fill="none" stroke="#d8d8d8" stroke-dasharray="1 1"/><circle cx="13" cy="12" r="1.500" fill="#fff"/></svg></span>
  <span class="tray w23"><svg width="16" height="14" viewBox="0 0 16 14"><path d="M1 5h3l4-4v12l-4-4H1z" fill="none" stroke="#fff"/><path d="M10 4q2 3 0 6M12 2q3 5 0 10" fill="none" stroke="#aaa"/></svg></span>
  <span class="tray w22 zh">中</span>
  <span class="tray w34"><svg width="16" height="16"><use href="#sogou"/></svg></span>
  <div class="clock"><span>9:17</span><span>2017/7/22</span></div>
  <span class="notif"><svg width="28" height="26" viewBox="0 0 28 26"><path d="M2 2h16v13h-6l-3 4v-4H2z" fill="#fff"/><path d="M5 6h10M5 9h10M5 12h7" stroke="#222"/><circle cx="17" cy="17" r="8" fill="#3a3a3a" stroke="#aaa"/></svg><b class="nb">2</b></span>
</div>

<div class="badge"><span>73</span></div>

<div class="float">
  <div class="ftop"></div>
  <div class="ftitle"><span>偏移工具栏</span><svg class="fx"><use href="#x2"/></svg></div>
  <div class="fbody">
    <span class="cb f46"><span>不偏移</span></span><span class="d"></span><span class="s"></span>
    <span class="lab">X=</span><span class="spin"><span>0</span><span class="ud"><span class="d up2"></span><span class="d"></span></span></span><span class="lab lm">mm</span>
    <span class="lab">Y=</span><span class="spin"><span>0</span><span class="ud"><span class="d up2"></span><span class="d"></span></span></span><span class="lab lm">mm</span>
    <span class="s"></span><span class="chk"></span><span class="rt">旋转</span>
    <span class="spin"><span>0.000</span><span class="ud"><span class="d up2"></span><span class="d"></span></span></span><span class="deg">°</span>
  </div>
</div>

<div class="ime">
  <svg class="logo"><use href="#sogou"/></svg>
  <div class="imebar">
    <span class="zhb">中</span>
    <span class="pun">°,</span>
    <svg width="16" height="18" viewBox="0 0 16 18"><rect x="5" y="1" width="6" height="10" rx="3" fill="#2a7fd0"/><path d="M2 8c0 6 12 6 12 0M8 14v3M5 17h6" stroke="#2a7fd0" fill="none" stroke-width="1.500"/></svg>
    <svg width="17" height="14" viewBox="0 0 17 14"><rect width="17" height="13" rx="2" fill="#2a7fd0"/><path d="M2 3h13M2 6h13" stroke="#fff" stroke-dasharray="1.500 1"/><path d="M4 9.500h9" stroke="#fff" stroke-width="1.500"/></svg>
    <svg width="17" height="16" viewBox="0 0 17 16"><circle cx="6" cy="5" r="4" fill="#b9cbdc"/><path d="M0 15c0-6 10-6 11 0z" fill="#b9cbdc"/><rect x="6" y="9" width="11" height="7" rx="1" fill="#d8e2ea"/></svg>
    <svg width="15" height="15" viewBox="0 0 15 15"><path d="M0 3l4-3h7l4 3-2 3-2-1v10H4V5L2 6z" fill="#2a7fd0"/></svg>
    <svg width="15" height="15" viewBox="0 0 15 15"><path d="M14 2l-3 3-2-1 0-2 3-2c-3-1-6 1-5 5L0 12l3 3 7-7c4 1 6-3 4-6z" fill="#2a7fd0"/></svg>
  </div>
</div>
</body>
</html>
```

FILE: styles.css
```css
*{box-sizing:border-box}
html,body{margin:0;padding:0}
body{width:1366px;height:768px;overflow:hidden;position:relative;display:flex;flex-direction:column;background:#f0f0f0;color:#000;font:12px/16px "Liberation Sans","Noto Sans CJK SC",sans-serif}
.lib{position:absolute;width:0;height:0}
.i{width:16px;height:16px;flex:none;display:block}
.sm{width:12px;height:12px;color:#222;display:block}

.title{height:23px;background:#fff;display:flex;align-items:center;flex:none}
.app{margin:0 4px 0 2px}
.ttext{flex:1;font-size:12.5px;letter-spacing:.15px;white-space:nowrap;overflow:hidden;padding-top:1px}
.win{display:flex;padding-right:1px}
.wb{width:46px;height:23px;display:flex;align-items:center;justify-content:center;padding-bottom:2px}
.wmin{width:10px;height:1px;background:#000}
.wres{width:10px;height:10px;border:1px solid #000;box-shadow:2px -2px 0 -1px #fff,2px -2px 0 0 #000}
.wx{width:12px;height:12px;color:#000}

.menu{height:30px;flex:none;display:grid;align-items:center;padding-left:7px;border-top:1px solid #f7f7f7;
  grid-template-columns:48px 49px 48px 52px 51px 54px 64px 50px 49px 61px 70px 73px 51px 60px 73px 8px 25px 44px 186px 7px 102px 11px 5px 52px 16px 1fr 14px 3px}
.menu>span{white-space:nowrap}
.ask{color:#4a6b00;padding-left:29px;background:#f7f7f7;height:26px;line-height:26px;border-radius:3px}
.phone{letter-spacing:.3px}
.more{font-size:15px;font-weight:bold;line-height:12px;text-align:center;align-self:start;padding-top:1px;color:#222}

.mainbar{height:31px;flex:none;display:flex;padding:1px 0 2px 3px;gap:2px}
.strip{background:#f8f8f8;border-radius:3px;display:grid;align-items:center}
.sa{width:148px;grid-template-columns:20px 24px 13px 23px 5px 22px 14px 1fr 18px}
.sb{width:547px;padding-left:4px;grid-template-columns:50px 76px 63px 75px 75px 87px 1fr 14px}
.sc{flex:1;padding:0 3px 0 2px;margin-left:1px;grid-template-columns:66px 48px 10px 5px 72px 91px 45px 74px 59px 1fr 14px}
.c{justify-self:center}
.it{display:flex;align-items:center;gap:4px;white-space:nowrap}
.off{color:#a8a8a8}
.sig{width:16px;text-align:center;font:bold 15px/16px "Liberation Sans",sans-serif;color:#111}
.tail{display:flex;justify-content:space-between;padding-right:23px}
.d{width:0;height:0;border:3.5px solid transparent;border-top:4px solid #222;border-bottom:0;justify-self:center;display:block}
.dg{border-top-color:#999;margin-left:2px}
.s{width:1px;height:20px;background:#c0c0c0;justify-self:center;display:block}
.h{width:2px;height:16px;justify-self:center;display:block;background-image:linear-gradient(#a8a8a8 50%,transparent 50%);background-size:2px 3px}

.cb{display:flex;align-items:center;justify-content:space-between;background:#fff;height:25px;padding-left:2px;white-space:nowrap}
.cb2{width:60px;height:27px}
.it2{display:flex;align-items:center;gap:2px}
.it2 .i{width:18px}
.dbox{width:11px;height:100%;background:#f6f6f6;display:flex;align-items:center;justify-content:center}
.w56{width:58px}.w72{width:72px}.w70{width:70px}.w58{width:58px}
.w50{width:50px}.w51{width:51px}
.btn{background:#dcebf8;border:1px solid #1c7fd0;height:24px;padding-left:3px}

.body{flex:1;display:flex;min-height:0}
.nav{width:199px;margin-right:4px;flex:none;display:flex;flex-direction:column}
.navh{height:15px;background:#0b58dc;color:#fff;display:flex;justify-content:space-between;align-items:center;font-size:13px;letter-spacing:.4px;flex:none}
.navb{display:flex;gap:6px;padding-right:4px}
.navb .sm{color:#fff}
.nbtn{height:22px;flex:none;margin:1px 1px 0 1px;border:1px solid #a0a0a0;background:#f0f0f0;text-align:center;line-height:21px;letter-spacing:.4px}
.tbox{height:514px;flex:none;margin:1px 1px 0 1px;border:1px solid #a0a0a0;background:#fff;display:flex;flex-direction:column}
.tools{height:28px;flex:none;display:flex;gap:7px;padding:5px 0 0 6px;background:linear-gradient(#f6f6f6,#fff)}
.exp{width:16px;height:16px}
.tview{flex:1;min-height:0;display:flex;overflow:hidden}
.tlist{flex:1;min-width:0}
.kids{margin-left:13px;border-left:1px dotted #808080}
.leaf{height:16px;position:relative;padding-left:29px;display:flex;align-items:center;gap:4px;white-space:nowrap}
.leaf::before{content:"";position:absolute;left:17px;top:0;bottom:0;border-left:1px dotted #808080}
.leaf::after{content:"";position:absolute;left:18px;top:8px;width:11px;border-top:1px dotted #808080}
.leaf:last-child::before{bottom:8px}
.leaf.on{background:linear-gradient(90deg,transparent 27px,#d9d9d9 27px,#d9d9d9 120px,transparent 120px)}
.leaf .m{margin-left:-4px}
.fd{height:16px;display:flex;align-items:center;padding-left:6px;gap:0;white-space:nowrap}
.fd .i{margin-right:5px}
.ch{width:12px;height:12px;flex:none;display:block}
.dots{width:6px;border-top:1px dotted #808080;flex:none}
.m{font:11px/1 "Liberation Mono",monospace;letter-spacing:-.6px}
.sb-v{width:16px;margin-right:2px;background:#f0f0f0;display:flex;flex-direction:column;flex:none}
.arr{display:flex;justify-content:center;padding-top:4px}
.up{height:30px}
.thumb{height:397px;background:#c6c6c6;flex:none}
.dn{flex:1;align-items:flex-end;padding-bottom:2px}

.center{width:897px;flex:none;display:flex;flex-direction:column}
.center>.strip,.rowpair{flex:none}
.r2{height:27px;margin-left:2px;grid-template-columns:9px 51px 6px 51px 51px 6px 51px 51px 6px 51px 51px 6px 51px 51px 52px 4px 60px 51px 1fr}
.rowpair{display:flex;gap:2px;height:28px;padding-left:2px}
.rowpair .strip{height:27px}
.r3{width:565px;grid-template-columns:7px 60px 72px 72px 70px 7px 54px 75px 75px 1fr}
.r3b{flex:1;grid-template-columns:10px 51px 51px 48px 14px 73px 11px 1fr 14px;margin-right:2px}
.r4p{height:29px;padding-top:1px}
.r4{width:859px;grid-template-columns:6px 51px 10px 11px 36px 9px 51px 72px 10px 63px 48px 9px 87px 75px 111px 1fr 14px}
.r4b{flex:1;grid-template-columns:9px 1fr;margin-right:2px}
.wblock{background:#fdfdfd;height:100%}
.cv{display:block;flex:none}
.ax text{fill:#d0d0d0;font:14px "Liberation Mono",monospace;text-anchor:middle}
.rb{height:28px;margin-left:2px;margin-right:420px;grid-template-columns:11px 48px 75px 75px 13px 48px 51px 54px 51px 49px}

.props{flex:1;display:flex;flex-direction:column;padding:0 2px 0 3px}
.ph{height:16px;display:flex;justify-content:flex-end;gap:6px;align-items:center;padding-right:2px;flex:none}
.pbox{flex:1;background:#fff;border:1px solid #a0a0a0;margin-bottom:-1px}
.pt{border-collapse:collapse;table-layout:fixed;width:259px}
.c1{width:21px}.c2{width:120px}.c3{width:86px}.c4{width:32px}
.pt th{height:24px;font-weight:normal;border:1px solid #c4c4c4;border-top:0;padding:0;background:#f1f1f1;overflow:hidden}
.pt th:first-child,.pt td:first-child{border-left:0}
.pt td{height:19px;padding:1px 0 0;border:1px solid #c4c4c4;overflow:hidden;white-space:nowrap;line-height:17px}
.hv{background:linear-gradient(#f8dca8,#f2c36e)!important;color:#5a1a6a}
.ha{background:#fff!important}
.n{background:linear-gradient(#fafafa,#ececec);text-align:center;color:#222}
.pt .nm{padding-left:19px}
.pt .v{padding-left:2px}
.lk{color:#0000f0}
.gr{color:#8c8c8c}
.sel .n{background:#fbd28e;color:#7a1010}
.sel .nm{background:#0078d7;color:#fff}
.sel .v{background:#d3e6f7}
.pt .k{text-align:center;vertical-align:middle;padding:0}
.k i{display:inline-block;width:13px;height:13px;border:1px solid #444;background:#fff;vertical-align:middle;margin-top:-1px}
.pt .plus{padding-left:3px}
.pl{display:inline-block;width:12px;height:12px;border:1px solid #aaa;line-height:10px;text-align:center;color:#222;margin-right:5px;vertical-align:middle;margin-top:-2px}

.status{height:22px;flex:none;display:grid;grid-template-columns:147px 77px 97px 47px 1fr 70px;gap:3px;padding-top:3px;background:#f0f0f0}
.cell{border:1px solid #dcdcdc;background:linear-gradient(#fff,#f4f4f4);padding-left:2px;line-height:17px;white-space:nowrap;overflow:hidden}

.task{height:41px;flex:none;background:#07131a;display:flex;align-items:center;color:#fff}
.start{width:48px;height:41px;background:#000;display:flex;align-items:center;justify-content:center;flex:none}
.search{width:344px;height:41px;background:#333;display:flex;align-items:center;padding-left:9px;margin-right:1px;flex:none}
.ring{width:22px;height:22px;flex:none}
.sq{font-size:14px;color:#7f8f9e;margin-left:5px;flex:1}
.mic{width:14px;height:18px;margin-right:14px}
.tk{width:49px;height:41px;display:flex;align-items:center;justify-content:center;flex:none;position:relative}
.run::after{content:"";position:absolute;left:5px;right:4px;bottom:0;height:2px;background:#6eaeea}
.act{background:#2a363d}
.act::after{left:0;right:0}
.t{width:24px;height:24px;display:block}
.q{font:bold 18px "Liberation Sans",sans-serif;fill:#ffe21a}
.cpu{width:130px;padding:1px 0 0 54px;display:flex;flex-direction:column;align-items:center;line-height:17px;flex:none;color:#ddd}
.tray{display:flex;align-items:center;justify-content:center;flex:none;height:41px}
.w24{width:24px}.w25{width:25px}.w23{width:23px}.w22{width:22px}.w34{width:34px}
.zh{font-size:13px}
.clock{width:76px;padding-top:1px;display:flex;flex-direction:column;align-items:center;font-size:13px;line-height:20px;flex:none;color:#e4e4e4}
.notif{width:48px;display:flex;align-items:center;justify-content:center;position:relative;flex:none}
.nb{position:absolute;left:23px;top:7px;width:14px;text-align:center;color:#fff;font:bold 12px/16px "Liberation Sans",sans-serif}

.badge{position:absolute;left:1082px;top:-30px;width:48px;height:48px;border-radius:50%;background:linear-gradient(#5fd060,#36b34a);border:2px solid #c8d4c8;box-shadow:0 2px 3px #999;color:#fff;font:bold 13px/14px "Liberation Sans",sans-serif;text-align:center;display:flex;align-items:flex-end;justify-content:center;padding-bottom:1px}

.float{position:absolute;left:915px;top:61px;width:403px;height:55px;background:#f0f0f0;box-shadow:0 1px 3px rgba(0,0,0,.35);display:flex;flex-direction:column}
.ftop{height:8px;background:#f6f6f6;flex:none}
.ftitle{height:21px;background:#9c9c9c;color:#e8e8e8;display:flex;justify-content:space-between;align-items:center;padding:0 6px 0 4px;flex:none;font-size:13px;letter-spacing:.6px}
.fx{width:10px;height:10px;color:#fff}
.fbody{flex:1;display:grid;align-items:center;color:#888;padding-left:1px;grid-template-columns:46px 14px 6px 19px 58px 28px 18px 58px 26px 4px 21px 28px 58px 1fr}
.f46{width:46px;height:24px;color:#000;padding-left:2px}
.lab{white-space:nowrap;color:#999;font-size:12.5px}
.lm{padding-left:2px;letter-spacing:.3px}
.spin{width:58px;height:22px;border:1px solid #7a7a7a;background:#f0f0f0;display:flex;align-items:center;justify-content:flex-end;font-size:13px;color:#8a8a8a}
.ud{width:18px;height:100%;display:flex;flex-direction:column;align-items:center;justify-content:space-around;padding-left:1px}
.ud .d{border-top-color:#666}
.up2{transform:rotate(180deg)}
.chk{width:13px;height:13px;border:1px solid #a6a6a6;margin-left:2px}
.rt{color:#000;white-space:nowrap}
.deg{padding-left:11px;align-self:start;padding-top:1px}

.ime{position:absolute;left:1086px;top:696px;display:flex;align-items:center;height:28px}
.logo{width:28px;height:28px;position:relative;z-index:1;flex:none}
.imebar{width:160px;height:24px;margin-left:-4px;background:#fff;border:1px solid #bcd2e8;display:flex;align-items:center;gap:7px;padding-left:9px}
.zhb{color:#1f7fd0;font-weight:bold;font-size:15px;width:16px}
.pun{color:#1f7fd0;font-weight:bold;width:16px;font-size:15px;margin-top:-4px}
```
